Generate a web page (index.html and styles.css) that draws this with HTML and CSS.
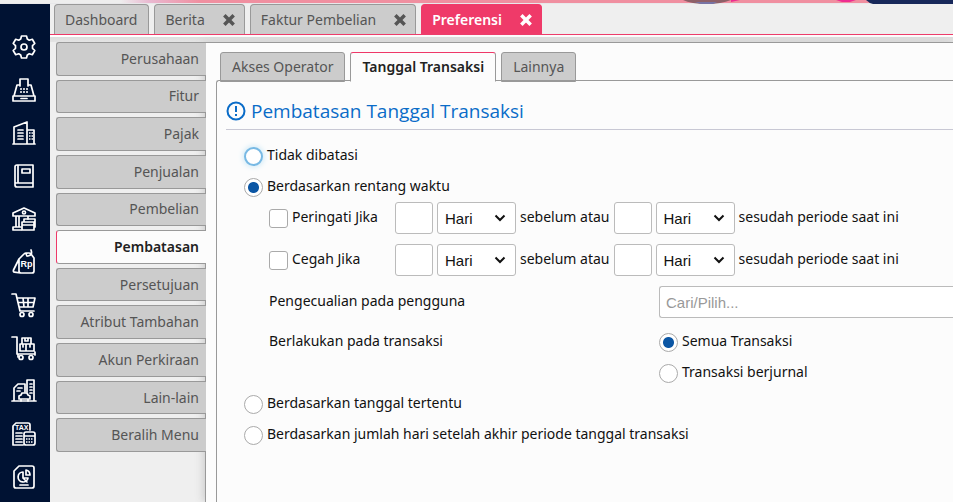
FILE: index.html
```
<!DOCTYPE html>
<html lang="id">
<head>
  <meta charset="UTF-8">
  <title>Preferensi</title>
  <link rel="stylesheet" href="styles.css">
</head>
<body>
  <div class="banner">
    <svg class="banner-art" width="270" height="4" viewBox="0 0 270 4" aria-hidden="true">
      <path d="M0 0h48q-10 4-24 4Q8 4 0 0z" fill="#8e6068"/>
      <path d="M12 2h22l-4 2H18z" fill="#7773a5"/>
      <path d="M48 0h9l-9 2zM153 0h20l-6 2h-8z" fill="#ee2d91"/>
      <path d="M183 0h87v4h-80q-4-1-7-4z" fill="#17285a"/>
    </svg>
  </div>

  <div class="app">
    <nav class="rail" aria-label="Modul">
      <a href="#" aria-label="Pengaturan">
        <svg class="icon" viewBox="0 0 24 24"><path d="M9.500 1h5l.8 3 2 1.200 3-.9 2.500 4.200-2.300 2.200v2.600l2.300 2.200-2.500 4.200-3-.9-2 1.200-.8 3h-5l-.8-3-2-1.200-3 .9-2.500-4.200 2.300-2.200v-2.600L1.200 8.500l2.500-4.200 3 .9 2-1.200z"/><circle cx="12" cy="12" r="3"/></svg>
      </a>
      <a href="#" aria-label="Kasir">
        <svg class="icon" viewBox="0 0 24 24"><path d="M8 8V1h8v7M8 7H5L2 18M16 7h3l3 11M1 18h22v5H1zM9 20.500h6"/><path d="M8 11h8M8 14h8" stroke-dasharray="2 1"/></svg>
      </a>
      <a href="#" aria-label="Perusahaan">
        <svg class="icon" viewBox="0 0 24 24"><path d="M1 23h22M2 23V6l13-5v22M15 9h7v14M6 9h5M6 12h5M6 15h5M6 18h5"/><path d="M17 12h4M17 15h4M17 18h4" stroke-dasharray="1.500 1"/></svg>
      </a>
      <a href="#" aria-label="Buku besar">
        <svg class="icon" viewBox="0 0 24 24"><path d="M6 1h15v22H5q-2 0-2-2V3q0-2 2-2zM6 1v18M4 19h17M10 5h8v4h-8z"/></svg>
      </a>
      <a href="#" aria-label="Kas dan bank">
        <svg class="icon" viewBox="0 0 24 24"><path d="M1 9V6l11-5 11 5v3zM4 9v11M7 9v11M1 23v-3h8M1 23h8M16 9v3"/><circle cx="12" cy="5.500" r="1.500"/><path d="M10 15h12v8H10zM12 15v-3h11v8M10 18h12"/></svg>
      </a>
      <a href="#" aria-label="Penjualan">
        <svg class="icon" viewBox="0 0 24 24"><path d="M7 9l5-5q1-1 2-1h3q1 0 2 1l3 4v13q0 2-2 2H9q-2 0-2-2zM7 9L1.500 20q-.5 2 1 2.200l6 .8M15 6q-2-3 1-3M16 6q5-1 3-6"/><text class="rp" x="8.500" y="17">Rp</text></svg>
      </a>
      <a href="#" aria-label="Pembelian">
        <svg class="icon" viewBox="0 0 24 24"><path d="M0 1h4l4 17h14M5 5h18l-2 9H7M6 9.500h16M11 5l1 9M16 5v9"/><circle cx="10" cy="21.500" r="2"/><circle cx="19" cy="21.500" r="2"/></svg>
      </a>
      <a href="#" aria-label="Persediaan">
        <svg class="icon" viewBox="0 0 24 24"><path d="M0 1h5v17h18M10 2h9v6h-9zM8 8h6v7H8zM14 8h8v7h-8zM13 2v3h3V2M11 9v2M18 9v2M23 16v3M6 18v3"/><circle cx="9" cy="21.500" r="2"/><circle cx="19" cy="21.500" r="2"/></svg>
      </a>
      <a href="#" aria-label="Aset tetap">
        <svg class="icon" viewBox="0 0 24 24"><path d="M0 22h24M2 22V9l4-4h7v8M15 13V1h7v21M18 5h2M18 8h2M18 11h2M18 14h2M6 9h4M5 12h3"/><path d="M7 20v-3l2-1 1-2h5l1 2 2 1v3zM9 20v2M16 20v2"/></svg>
      </a>
      <a href="#" aria-label="Pajak">
        <svg class="icon" viewBox="0 0 24 24"><path d="M11 23H1V4l3-3h12q2 0 2 2v5M4 11h6M4 14h6M4 17h6M4 20h6M14 10h7q2 0 2 2v9q0 2-2 2h-7q-2 0-2-2v-9q0-2 2-2zM12 14h11"/><path d="M14 17h7M14 20h7" stroke-dasharray="1.500 1"/><text class="tax" x="3" y="8">TAX</text></svg>
      </a>
      <a href="#" aria-label="Laporan">
        <svg class="icon" viewBox="0 0 24 24"><path d="M7 1h13q2 0 2 2v18q0 2-2 2H4q-2 0-2-2V6zM11 7a5 5 0 1 0 5 6h-5zM14 5v5h4q0-4-4-5zM8 20h8M11 13l4 4"/></svg>
      </a>
    </nav>

    <div class="main">
      <div class="tabs">
        <button type="button" class="tab">Dashboard</button>
        <button type="button" class="tab">Berita <svg class="close" viewBox="0 0 12 12"><path d="M2 2l8 8M10 2l-8 8"/></svg></button>
        <button type="button" class="tab">Faktur Pembelian <svg class="close" viewBox="0 0 12 12"><path d="M2 2l8 8M10 2l-8 8"/></svg></button>
        <button type="button" class="tab tab-active">Preferensi <svg class="close" viewBox="0 0 12 12"><path d="M2 2l8 8M10 2l-8 8"/></svg></button>
      </div>

      <div class="workspace">
        <nav class="side">
          <button type="button" class="side-tab">Perusahaan</button>
          <button type="button" class="side-tab">Fitur</button>
          <button type="button" class="side-tab">Pajak</button>
          <button type="button" class="side-tab">Penjualan</button>
          <button type="button" class="side-tab">Pembelian</button>
          <button type="button" class="side-tab side-active">Pembatasan</button>
          <button type="button" class="side-tab">Persetujuan</button>
          <button type="button" class="side-tab">Atribut Tambahan</button>
          <button type="button" class="side-tab">Akun Perkiraan</button>
          <button type="button" class="side-tab">Lain-lain</button>
          <button type="button" class="side-tab">Beralih Menu</button>
        </nav>

        <section class="panel">
          <div class="subtabs">
            <button type="button" class="subtab">Akses Operator</button>
            <button type="button" class="subtab subtab-active">Tanggal Transaksi</button>
            <button type="button" class="subtab">Lainnya</button>
          </div>

          <form class="content">
            <h2 class="title">
              <svg class="info" viewBox="0 0 20 20"><circle cx="10" cy="10" r="8.500"/><path d="M10 5v6M10 13v2"/></svg>
              Pembatasan Tanggal Transaksi
            </h2>

            <div class="rows">
              <div class="row">
                <input type="radio" name="batas" id="b1" class="radio radio-focus">
                <label for="b1">Tidak dibatasi</label>
              </div>
              <div class="row">
                <input type="radio" name="batas" id="b2" class="radio" checked>
                <label for="b2">Berdasarkan rentang waktu</label>
              </div>

              <div class="row row-tall">
                <div class="check-cell">
                  <input type="checkbox" id="warn" class="check">
                  <label for="warn">Peringati Jika</label>
                </div>
                <input type="text" class="num" aria-label="Jumlah sebelum">
                <select class="unit" aria-label="Satuan sebelum"><option>Hari</option><option>Bulan</option></select>
                <span>sebelum atau</span>
                <input type="text" class="num" aria-label="Jumlah sesudah">
                <select class="unit" aria-label="Satuan sesudah"><option>Hari</option><option>Bulan</option></select>
                <span>sesudah periode saat ini</span>
              </div>
              <div class="row row-tall">
                <div class="check-cell">
                  <input type="checkbox" id="block" class="check">
                  <label for="block">Cegah Jika</label>
                </div>
                <input type="text" class="num" aria-label="Jumlah sebelum">
                <select class="unit" aria-label="Satuan sebelum"><option>Hari</option><option>Bulan</option></select>
                <span>sebelum atau</span>
                <input type="text" class="num" aria-label="Jumlah sesudah">
                <select class="unit" aria-label="Satuan sesudah"><option>Hari</option><option>Bulan</option></select>
                <span>sesudah periode saat ini</span>
              </div>

              <div class="row row-field">
                <label for="user" class="field-label">Pengecualian pada pengguna</label>
                <input type="text" id="user" class="search" placeholder="Cari/Pilih...">
              </div>
              <div class="row row-options">
                <span class="field-label" id="apply">Berlakukan pada transaksi</span>
                <div role="radiogroup" aria-labelledby="apply">
                  <div class="row">
                    <input type="radio" name="trx" id="t1" class="radio" checked>
                    <label for="t1">Semua Transaksi</label>
                  </div>
                  <div class="row">
                    <input type="radio" name="trx" id="t2" class="radio">
                    <label for="t2">Transaksi berjurnal</label>
                  </div>
                </div>
              </div>

              <div class="row">
                <input type="radio" name="batas" id="b3" class="radio">
                <label for="b3">Berdasarkan tanggal tertentu</label>
              </div>
              <div class="row">
                <input type="radio" name="batas" id="b4" class="radio">
                <label for="b4">Berdasarkan jumlah hari setelah akhir periode tanggal transaksi</label>
              </div>
            </div>
          </form>
        </section>
      </div>
    </div>
  </div>
</body>
</html>
```
FILE: styles.css
```
* { box-sizing: border-box; }
body { margin: 0; height: 100vh; display: flex; flex-direction: column; overflow: hidden; background: #efefef; color: #111; font: 14px/20px "Noto Sans", "Open Sans", sans-serif; }
button, input, select { font: inherit; margin: 0; }

.banner { height: 4px; flex: none; display: flex; justify-content: flex-end; background: linear-gradient(to right, #eee 0, #eee 120px, #e9b8d0 150px, #f08fa0 200px, #f08fa0); border-bottom: 1px solid #e8e8ea; }
.banner-art { flex: none; }
.app { flex: 1; display: flex; min-height: 0; }

/* icon rail */
.rail { width: 50px; flex: none; display: flex; flex-direction: column; align-items: center; gap: 19px; padding: 31px 2px 0 0; background: #001233; overflow: hidden; }
.rail a { height: 24px; flex: none; }
.icon { display: block; width: 24px; height: 24px; fill: none; stroke: #fff; stroke-width: 1.7; stroke-linejoin: round; stroke-linecap: round; overflow: visible; }
.icon [stroke-dasharray] { stroke-linecap: butt; }
.icon text { fill: #fff; stroke: none; font-family: "Liberation Sans", sans-serif; font-weight: bold; }
.rp { font-size: 9px; }
.tax { font-size: 7px; }

/* window tabs */
.main { flex: 1; min-width: 0; display: flex; flex-direction: column; }
.tabs { display: flex; gap: 5px; height: 31px; padding-left: 4px; border-bottom: 1px solid #ee3868; }
.tab { display: flex; align-items: center; gap: 17px; padding: 0 11px 0 10px; border: 1px solid #999; border-bottom: 0; border-radius: 4px 4px 0 0; background: #ccc; color: #555; white-space: nowrap; }
.tab-active { background: #ef3a69; border-color: #ef3a69; color: #fff; font-weight: 600; }
.close { width: 14px; height: 14px; fill: none; stroke: currentColor; stroke-width: 3; }
.tab .close { margin-right: -3px; }

.workspace { flex: 1; min-height: 0; display: flex; padding-top: 7px; background: linear-gradient(#fff 0, #fff 2px, #ddd 2px, #e4e4e4 7px, transparent 7px); }

/* vertical tabs */
.side { position: relative; z-index: 1; width: 156px; flex: none; height: 410px; display: grid; grid-auto-rows: 1fr; gap: 4px; padding-left: 6px; }
.side-tab { padding: 0 7px 0 0; border: 1px solid #999; border-right: 0; border-radius: 3px 0 0 3px; background: #ccc; color: #555; text-align: right; }
.side-active { background: #fcfcfc; border-left-color: #ee3868; color: #222; font-weight: 600; }

.panel { flex: 1; min-width: 0; margin-left: -1px; padding: 9px 0 0 10px; display: flex; flex-direction: column; border-top: 1px solid #999; border-left: 1px solid #999; background: #fcfcfc; box-shadow: -2px 0 8px #ccc; }
.subtabs { display: flex; gap: 5px; padding-left: 4px; }
.subtab { height: 30px; padding: 0 11px; border: 1px solid #999; border-radius: 3px 3px 0 0; background: #ccc; color: #555; white-space: nowrap; }
.subtab-active { position: relative; background: #fcfcfc; border-top-color: #ee3868; border-bottom-color: #fcfcfc; color: #222; font-weight: 600; }
.content { flex: 1; margin-top: -2px; padding: 13px 0 0 9px; border: 1px solid #999; border-right: 0; border-bottom: 0; border-radius: 3px 0 0 0; }

.title { display: flex; align-items: center; gap: 5px; margin: 0; height: 36px; padding-bottom: 2px; border-bottom: 1px solid #c8c8d4; color: #0a6cc8; font: 400 19px/24px "Open Sans", "Noto Sans", sans-serif; }
.info { width: 20px; height: 20px; flex: none; fill: none; stroke: currentColor; stroke-width: 2; }

/* form rows */
.rows { padding: 10px 0 0 18px; }
.row { display: flex; align-items: flex-start; gap: 4px; min-height: 31px; line-height: 30px; white-space: nowrap; }
.row-tall { padding-left: 25px; min-height: 42px; }
.row-field { padding-left: 25px; min-height: 40px; }
.row-options { padding-left: 25px; }
.check-cell { width: 122px; flex: none; display: flex; gap: 4px; }
.field-label { width: 386px; flex: none; }

.radio, .check { appearance: none; width: 19px; height: 19px; flex: none; margin-top: 7px; border: 1px solid #aaa; background: #fff; }
.radio { border-radius: 50%; }
.radio:checked { background: radial-gradient(circle, #0b56a4 5px, #fff 6px); }
.radio-focus { border: 2px solid #78b9e4; box-shadow: 0 0 6px #b8e0f4; }
.check { border-radius: 3px; }
.num, .unit, .search { height: 32px; border: 1px solid #bbb; border-radius: 3px; background: #fff; }
.num { width: 38px; flex: none; }
.unit { width: 79px; flex: none; padding: 0 7px; color: #111; font: 15px "Liberation Sans", sans-serif; appearance: none; background: #fff url("data:image/svg+xml,%3Csvg xmlns='http://www.w3.org/2000/svg' width='12' height='8'%3E%3Cpath d='M1.500 1.500L6 6l4.500-4.500' fill='none' stroke='%23111' stroke-width='2'/%3E%3C/svg%3E") no-repeat right 9px center; }
.search { flex: 1; min-width: 0; padding: 0 6px; border-right: 0; border-radius: 3px 0 0 3px; font: 15px "Liberation Sans", sans-serif; }
.search::placeholder { color: #999; }
```
